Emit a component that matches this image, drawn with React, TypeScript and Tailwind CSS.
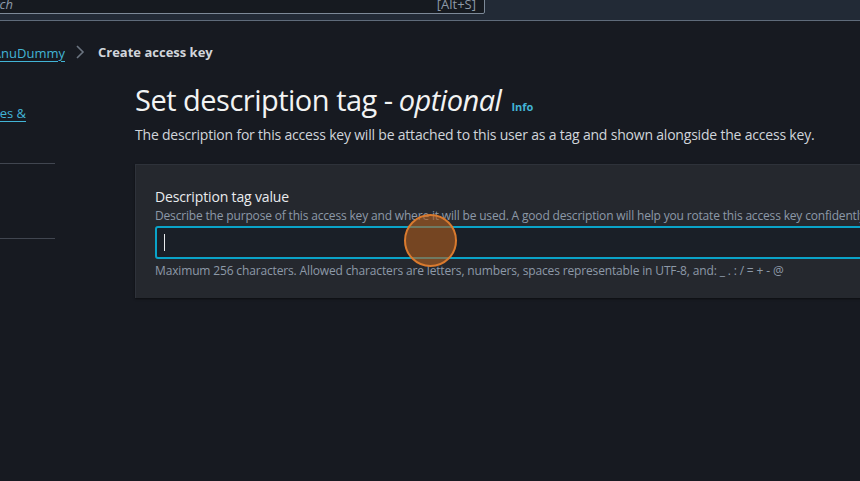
export default function App() {
  return (
    <div className="w-[860px] h-[481px] overflow-hidden bg-[#171a21] text-[#e9ebed] font-['Open_Sans',sans-serif]">
      {/* top bar */}
      <div className="h-[21px] bg-[#222a36] border-b border-[#5f6b7a] flex">
        <div className="w-[485px] h-[15px] -mt-px flex justify-end overflow-hidden">
          <div className="w-[520px] shrink-0 h-[15px] bg-[#161a20] border border-[#7d8998] rounded-br-[2px] flex items-end justify-between px-2 pb-[1px] text-[13px] leading-[15px] text-[#8d99a8]">
            <span className="italic">Search</span>
            <span>[Alt+S]</span>
          </div>
        </div>
      </div>

      <div className="flex">
        {/* steps */}
        <div className="w-[55px] shrink-0">
          <div className="h-[42px] flex items-end justify-end overflow-hidden whitespace-nowrap w-[65px] text-[13px]">
            <a className="text-[#42b4d6] underline underline-offset-[3px] decoration-1">AnuDummy</a>
          </div>
          <div className="mt-[41px] flex justify-end overflow-hidden whitespace-nowrap w-[26px] text-[13px]">
            <a className="text-[#42b4d6] underline underline-offset-[3px] decoration-1">Access key best practices &amp;</a>
          </div>
          <div className="mt-[39px] border-t border-[#414650]" />
          <div className="mt-[74px] border-t border-[#414650]" />
        </div>

        <div className="flex-1 min-w-0">
          {/* breadcrumb */}
          <div className="h-[42px] flex items-end text-[13px] whitespace-nowrap">
            <div className="flex items-center pb-[1px]">
              <svg width="12" height="16" viewBox="0 0 12 16" className="ml-[19px] mr-[12px]">
                <path d="M3 2l6 6-6 6" fill="none" stroke="#6b7480" strokeWidth="1.6" />
              </svg>
              <span className="font-bold text-[#d1d5db]">Create access key</span>
            </div>
          </div>

          {/* header */}
          <div className="pl-[80px] mt-[19px]">
            <h1 className="flex items-baseline whitespace-nowrap text-[29px] leading-[36px] tracking-[-0.5px] font-normal text-[#f2f3f3]">
              Set description tag - <span className="italic ml-[6px]">optional</span>
              <a className="ml-[10px] text-[11px] font-bold tracking-normal text-[#42b4d6]">Info</a>
            </h1>
            <p className="mt-[1px] text-[14px] leading-[18px] tracking-[-0.2px] whitespace-nowrap text-[#d1d5db]">
              The description for this access key will be attached to this user as a tag and shown alongside the access key.
            </p>

            {/* card */}
            <div className="mt-[20px] w-[760px] h-[134px] bg-[#25282e] border-l border-t border-[#2e323a] shadow-[0_1px_2px_rgba(0,0,0,0.5)] px-[19px] pt-[23px] relative">
              <div className="text-[14px] leading-[18px] tracking-[-0.15px] text-[#e9ebed]">Description tag value</div>
              <div className="mt-[2px] text-[12px] leading-[15px] tracking-[-0.17px] whitespace-nowrap text-[#8d99a8]">
                Describe the purpose of this access key and where it will be used. A good description will help you rotate this access key confidently later.
              </div>
              <div className="mt-[3px] h-[33px] rounded-[3px] border-2 border-[#0aa3c8] bg-[#1a1f27] flex items-center pl-[7px]">
                <div className="w-px h-[17px] bg-[#e9ebed]" />
              </div>
              <div className="mt-[4px] text-[12px] leading-[15px] tracking-[-0.15px] whitespace-nowrap text-[#8d99a8]">
                Maximum 256 characters. Allowed characters are letters, numbers, spaces representable in UTF-8, and: _ . : / = + - @
              </div>
              {/* click marker */}
              <div className="absolute left-[268px] top-[49px] w-[53px] h-[53px] rounded-full border-2 border-[#d97a2e] bg-[#b35f1f]/60" />
            </div>
          </div>
        </div>
      </div>
    </div>
  );
}
